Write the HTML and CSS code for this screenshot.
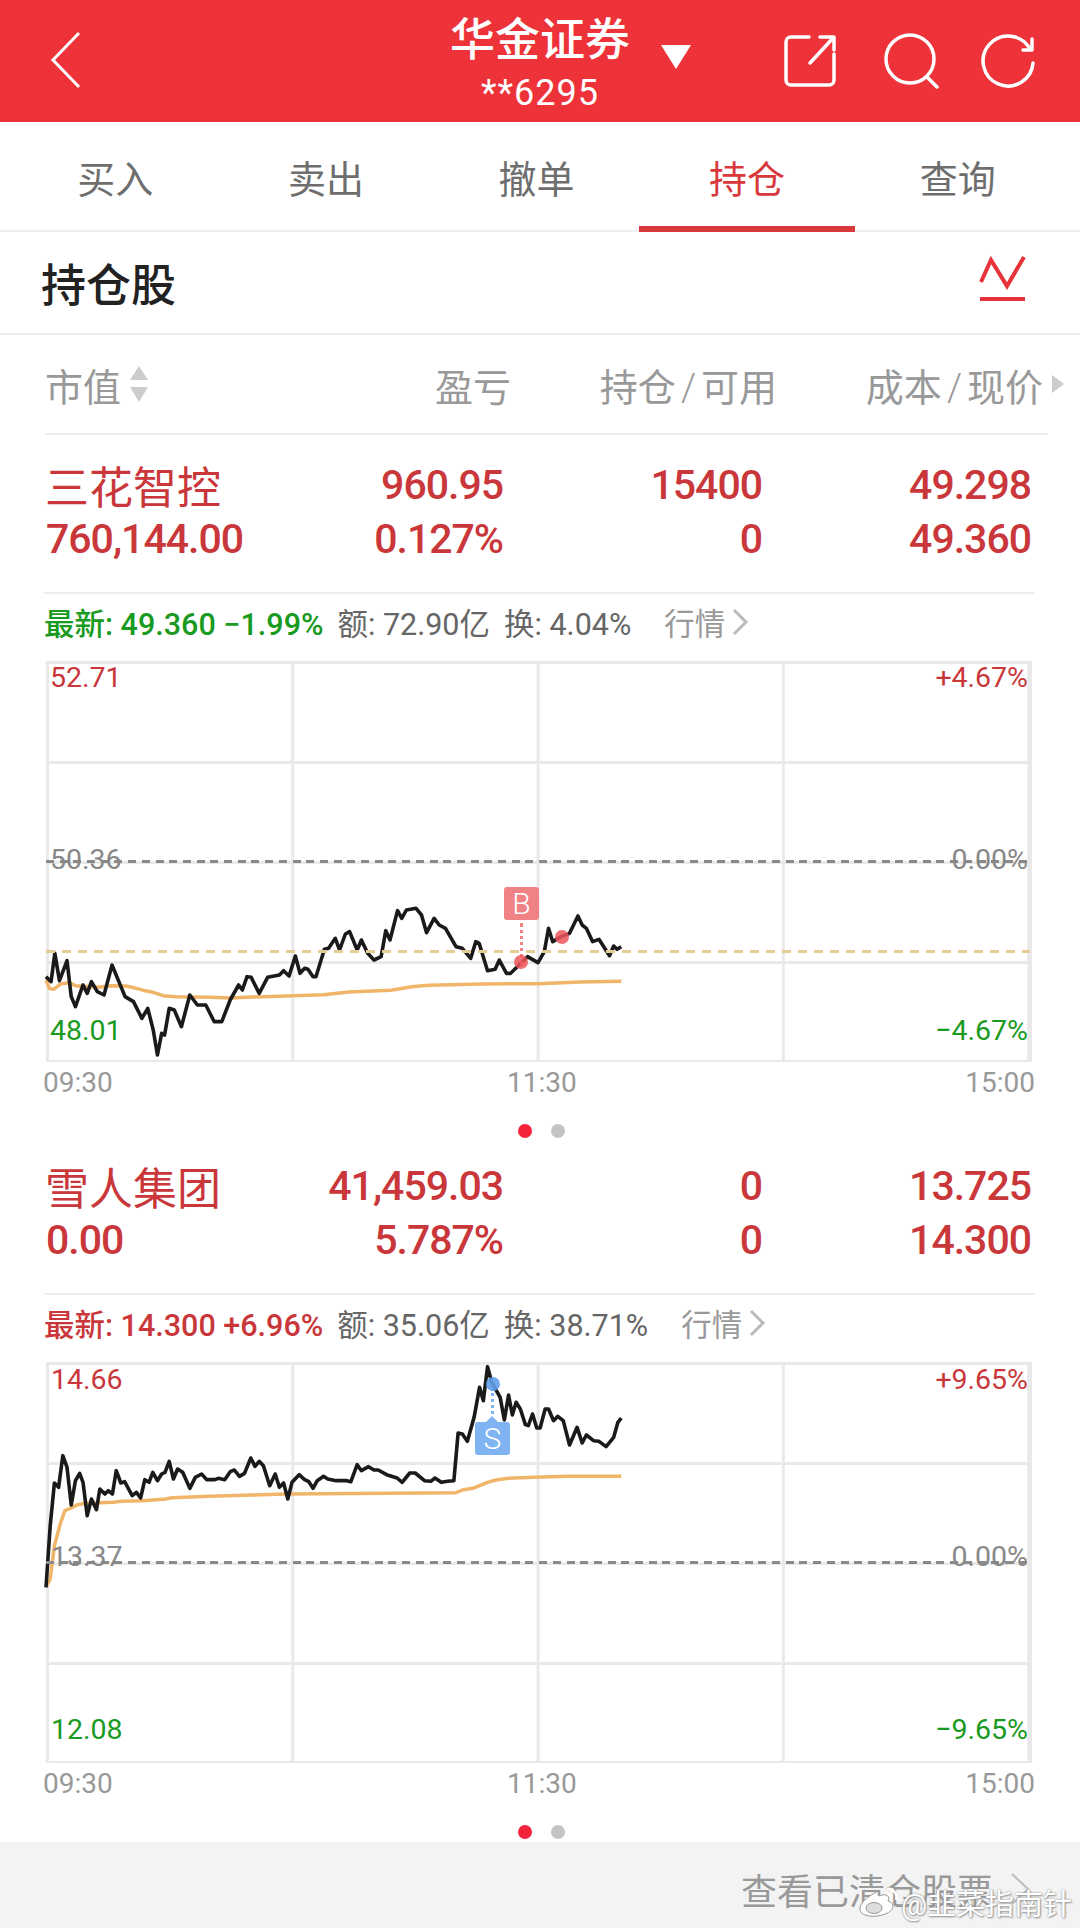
FILE: index.html
```html
<!DOCTYPE html>
<html lang="zh-CN">
<head>
  <meta charset="UTF-8" />
  <meta name="viewport" content="width=device-width, initial-scale=1.0"/>
  <title>持仓</title>
  <link rel="stylesheet" href="styles.css">
</head>
<body>

<div class="page">
  <header class="topbar">
    <svg class="back" viewBox="0 0 40 60" width="40" height="60"><path d="M32 3 L6 30 L32 57" /></svg>
    <div class="broker">
      <div class="broker-name">华金证券<svg class="caret" viewBox="0 0 34 28" width="34" height="28"><path d="M2 2 H32 L17 26 Z" /></svg></div>
      <div class="broker-acct">**6295</div>
    </div>
    <div class="top-icons">
      <svg viewBox="0 0 60 60" width="60" height="60"><path d="M29 7 H11 a5 5 0 0 0 -5 5 V50 a5 5 0 0 0 5 5 H49 a5 5 0 0 0 5 -5 V24 M30 33 L54 7 M40 7 H54 V20" /></svg>
      <svg viewBox="0 0 60 60" width="60" height="60"><circle cx="31" cy="29" r="24" /><path d="M48 47 L58 57" /></svg>
      <svg viewBox="0 0 60 60" width="60" height="60"><path d="M52 19 A25 25 0 1 0 55 33 M54 9 V20 H45" /></svg>
    </div>
  </header>

  <nav class="tabs">
    <a class="tab">买入</a>
    <a class="tab">卖出</a>
    <a class="tab">撤单</a>
    <a class="tab active">持仓</a>
    <a class="tab">查询</a>
  </nav>

  <div class="section-title">
    <h2>持仓股</h2>
    <svg viewBox="0 0 47 48" width="47" height="48"><path d="M2 27 L12 5 L28 31 L45 2" /><path class="base" d="M1 44 H46" /></svg>
  </div>

  <div class="table-head">
    <div class="sort-col">市值<svg viewBox="0 0 18 36" width="18" height="36"><path d="M9 0 L18 14 H0 Z M0 21 H18 L9 36 Z" /></svg></div>
    <div>盈亏</div>
    <div>持仓<i>/</i>可用</div>
    <div class="last-col">成本<i>/</i>现价<svg viewBox="0 0 12 18" width="12" height="18"><path d="M0 0 L12 9 L0 18 Z" /></svg></div>
  </div>

  <section class="holding first">
    <div class="stock-row">
      <div class="stock-name">三花智控</div><div>960.95</div><div>15400</div><div>49.298</div>
      <div>760,144.00</div><div>0.127%</div><div>0</div><div>49.360</div>
    </div>
    <div class="info">
      <span class="green">最新: 49.360 −1.99%</span>
      <span>额: 72.90亿</span>
      <span>换: 4.04%</span>
      <a class="quote">行情<svg viewBox="0 0 18 30" width="18" height="30"><path d="M3 3 L15 15 L3 27" /></svg></a>
    </div>
    <div class="chart">
      <svg class="plot" viewBox="110 -537 2340 1197" preserveAspectRatio="none">
        <polyline class="avg" points="110,420 118,445 128,448 145,432 165,428 180,437 215,440 240,441 265,437 300,438 325,445 345,452 365,457 388,467 420,470 500,472 550,474 600,471 700,467 770,464 830,456 930,451 980,440 1020,436 1150,432 1280,431 1380,426 1478,424" />
        <polyline class="price" points="110,410 122,425 131,340 142,422 160,362 170,470 180,500 198,435 208,460 218,425 232,455 248,465 267,375 285,430 298,470 318,485 338,535 352,505 365,570 375,645 385,580 392,585 403,505 415,510 432,560 452,465 470,495 490,495 510,545 528,545 548,480 568,435 577,450 588,410 598,412 617,460 637,412 665,405 675,392 688,408 703,348 714,400 725,385 733,388 745,410 752,410 772,328 782,325 798,295 808,330 822,282 832,275 850,330 860,300 875,340 890,360 907,350 918,272 928,300 946,212 956,235 967,210 990,205 1003,225 1015,278 1033,235 1045,255 1060,265 1085,320 1100,325 1120,355 1132,305 1140,310 1160,392 1178,388 1188,360 1205,400 1215,400 1235,375 1255,350 1280,368 1295,335 1305,265 1315,305 1335,290 1355,280 1375,228 1385,255 1395,265 1410,305 1425,298 1450,347 1460,318 1468,328 1478,320" />
      </svg>
      <div class="dash gray-dash"></div>
      <div class="dash gold-dash"></div>
      <span class="lbl l-top red">52.71</span>
      <span class="lbl l-mid gray">50.36</span>
      <span class="lbl l-bot green">48.01</span>
      <span class="lbl r-top red">+4.67%</span>
      <span class="lbl r-mid gray">0.00%</span>
      <span class="lbl r-bot green">−4.67%</span>
      <div class="mark buy">
        <span class="badge">B</span>
        <span class="stem"></span>
      </div>
      <span class="pt pt-buy"></span>
      <span class="pt pt-buy2"></span>
    </div>
    <div class="times"><span>09:30</span><span class="t-mid">11:30</span><span>15:00</span></div>
    <div class="pager"><span class="on"></span><span></span></div>
  </section>

  <section class="holding">
    <div class="stock-row">
      <div class="stock-name">雪人集团</div><div>41,459.03</div><div>0</div><div>13.725</div>
      <div>0.00</div><div>5.787%</div><div>0</div><div>14.300</div>
    </div>
    <div class="info">
      <span class="red">最新: 14.300 +6.96%</span>
      <span>额: 35.06亿</span>
      <span>换: 38.71%</span>
      <a class="quote">行情<svg viewBox="0 0 18 30" width="18" height="30"><path d="M3 3 L15 15 L3 27" /></svg></a>
    </div>
    <div class="chart chart-second">
      <svg class="plot" viewBox="110 69 2340 1197" preserveAspectRatio="none">
        <polyline class="avg" points="110,745 120,720 130,620 145,550 155,515 170,507 185,497 205,493 270,490 290,487 340,485 395,480 410,476 500,472 600,468 680,465 1085,461 1100,453 1125,448 1160,430 1180,423 1210,418 1270,415 1350,412 1478,412" />
        <polyline class="price" points="110,745 120,560 130,432 140,445 150,350 160,385 170,498 180,425 190,403 198,430 208,530 218,480 230,512 238,450 250,465 258,455 268,465 277,395 288,432 297,428 315,470 325,460 335,477 345,422 355,430 364,400 375,425 385,405 393,400 403,367 413,420 423,390 435,400 452,448 465,415 480,405 492,422 512,422 520,418 535,422 548,398 558,393 570,412 582,403 597,357 607,382 617,367 627,380 642,440 655,405 665,445 675,432 685,480 695,430 712,407 725,422 735,428 745,448 755,425 770,412 780,420 800,425 825,425 835,428 850,377 860,395 877,383 890,393 900,393 920,407 945,417 957,430 975,402 988,402 1010,425 1025,427 1035,417 1050,430 1065,427 1080,425 1090,282 1100,285 1112,307 1128,235 1141,145 1150,185 1160,83 1170,130 1190,175 1200,243 1210,168 1219,228 1228,190 1238,210 1250,257 1257,260 1267,225 1277,267 1285,267 1297,210 1305,210 1317,245 1327,232 1340,245 1355,318 1373,265 1385,312 1395,288 1412,305 1425,307 1442,323 1460,295 1470,250 1478,237" />
      </svg>
      <div class="dash gray-dash"></div>
      <span class="lbl l-top red">14.66</span>
      <span class="lbl l-mid gray">13.37</span>
      <span class="lbl l-bot green">12.08</span>
      <span class="lbl r-top red">+9.65%</span>
      <span class="lbl r-mid gray">0.00%</span>
      <span class="lbl r-bot green">−9.65%</span>
      <div class="mark sell">
        <span class="stem"></span>
        <span class="badge">S</span>
      </div>
      <span class="pt pt-sell"></span>
    </div>
    <div class="times"><span>09:30</span><span class="t-mid">11:30</span><span>15:00</span></div>
    <div class="pager"><span class="on"></span><span></span></div>
  </section>

  <footer class="closed">
    <span>查看已清仓股票</span>
    <svg viewBox="0 0 20 34" width="20" height="34"><path d="M2 2 L18 17 L2 32" /></svg>
    <div class="watermark">
      <svg viewBox="0 0 44 32" width="44" height="32"><path d="M18 7 C8 12 2 19 3 24 C4 29 12 31 20 30 C29 29 36 25 36 20 C36 17 33 16 31 15 C33 11 31 8 25 9 C22 10 21 10 21 9 C22 5 21 5 18 7 Z" /><ellipse class="eye" cx="17" cy="22" rx="8" ry="5.5" /><path class="arc" d="M30 3 C36 2 41 8 39 14 M30 8 C33 8 35 10 34 13" /></svg>
      <span>@韭菜指南针</span>
    </div>
  </footer>
</div>

</body>
</html>
```

FILE: styles.css
```css
* {
  box-sizing: border-box;
}
body {
  margin: 0;
  background: #fff;
  font-family: Roboto, "Noto Sans CJK SC", sans-serif;
}
.page {
  width: 1080px;
  height: 1928px;
  overflow: hidden;
  display: flex;
  flex-direction: column;
}

/* barra roja */
.topbar {
  height: 122px;
  flex: none;
  background: #ee3239;
  color: #fff;
  display: grid;
  grid-template-columns: 1fr auto 1fr;
  position: relative;
}
.back {
  margin: 30px 0 0 47px;
  fill: none;
  stroke: #fff;
  stroke-width: 3;
}
.broker {
  padding-top: 13px;
  text-align: center;
}
.broker-name {
  font-size: 45px;
  line-height: 56px;
  font-weight: 500;
  position: relative;
}
.caret {
  position: absolute;
  left: 100%;
  top: 30px;
  margin-left: 29px;
  fill: #fff;
}
.broker-acct {
  font-size: 36px;
  line-height: 40px;
  margin-top: 4px;
  letter-spacing: 1px;
}
.top-icons {
  display: flex;
  justify-content: flex-end;
  gap: 39px;
  padding: 30px 42px 0 0;
}
.top-icons svg {
  fill: none;
  stroke: #fff;
  stroke-width: 3.5;
  stroke-linecap: round;
  stroke-linejoin: round;
}

/* pestañas */
.tabs {
  height: 110px;
  flex: none;
  display: grid;
  grid-template-columns: repeat(5, 210.6px);
  padding-left: 10px;
  border-bottom: 2px solid #eee;
}
.tab {
  font-size: 38px;
  color: #6e6e6e;
  display: flex;
  align-items: center;
  justify-content: center;
  position: relative;
}
.tab.active {
  color: #d9383c;
}
.tab.active::after {
  content: "";
  position: absolute;
  left: -3px;
  right: -3px;
  bottom: -2px;
  height: 6px;
  background: #d9383c;
}

.section-title {
  height: 103px;
  flex: none;
  display: flex;
  align-items: center;
  justify-content: space-between;
  padding: 0 54px 0 41px;
  border-bottom: 2px solid #eee;
}
.section-title h2 {
  margin: 0;
  font-size: 45px;
  font-weight: 500;
  color: #222;
}
.section-title svg {
  margin-top: -8px;
  fill: none;
  stroke: #e8323a;
  stroke-width: 4;
}

/* tabla */
.table-head {
  height: 100px;
  flex: none;
  margin: 0 32px 0 45px;
  display: grid;
  grid-template-columns: 300px 166px 266px 266px;
  align-items: center;
  text-align: right;
  font-size: 38px;
  color: #999;
  border-bottom: 2px solid #eee;
}
.table-head i {
  font-style: normal;
  font-weight: 300;
  margin: 0 5px;
}
.sort-col {
  display: flex;
  align-items: center;
  gap: 9px;
}
.sort-col svg {
  fill: #ccc;
}
.last-col {
  position: relative;
}
.last-col svg {
  position: absolute;
  left: 100%;
  top: 18px;
  margin-left: 9px;
  fill: #ccc;
}

.holding.first {
  margin-top: 23px;
}
.holding + .holding {
  margin-top: 18px;
}
.stock-row {
  margin-left: 46px;
  display: grid;
  grid-template-columns: 277px 180px 259px 269px;
  grid-auto-rows: 54px;
  align-items: center;
  text-align: right;
  font-size: 41px;
  letter-spacing: -1px;
  font-weight: 500;
  color: #c9373b;
  padding-bottom: 26px;
}
.stock-row > div:nth-child(4n+1) {
  text-align: left;
}
.stock-name {
  margin-left: -1px;
  font-size: 44px;
  font-weight: 400;
  letter-spacing: 0;
}

.info {
  height: 60px;
  margin: 0 45px 9px 44px;
  padding-bottom: 3px;
  display: flex;
  align-items: center;
  gap: 14px;
  font-size: 30.5px;
  color: #666;
  border-top: 2px solid #eee;
}
.info .green, .info .red {
  font-weight: 500;
}
.quote {
  display: flex;
  align-items: center;
  gap: 6px;
  margin-left: 19px;
  color: #999;
}
.quote svg {
  fill: none;
  stroke: #bbb;
  stroke-width: 3;
}
.green {
  color: #199a21;
}
.red {
  color: #c9373b;
}
.gray {
  color: #888;
}

/* gráfico */
.chart {
  width: 986px;
  height: 401px;
  margin-left: 46px;
  position: relative;
  border-right: 2px solid #e9e9e9;
  border-bottom: 2px solid #e9e9e9;
  background-image:
    linear-gradient(#e9e9e9 3px, transparent 3px),
    linear-gradient(90deg, #e9e9e9 3px, transparent 3px);
  background-size: 245.3px 100px;
}
.plot {
  position: absolute;
  left: 0;
  top: 0;
  width: 100%;
  height: 100%;
  overflow: visible;
  fill: none;
}
.plot polyline {
  vector-effect: non-scaling-stroke;
  stroke-linejoin: round;
}
.price {
  stroke: #1a1a1a;
  stroke-width: 3.6;
}
.avg {
  stroke: #f0b569;
  stroke-width: 3.5;
}
.dash {
  position: absolute;
  left: 0;
  right: 0;
  height: 3px;
}
.gray-dash {
  top: 199px;
  background: repeating-linear-gradient(90deg, #8a8a8a 0 8px, transparent 8px 13.7px);
}
.gold-dash {
  top: 289px;
  background: repeating-linear-gradient(90deg, #e8cb94 0 9px, transparent 9px 16px);
}
.lbl {
  position: absolute;
  font-size: 28.5px;
  line-height: 32px;
}
.l-top, .l-mid, .l-bot {
  left: 4px;
}
.r-top, .r-mid, .r-bot {
  right: 2px;
}
.l-top, .r-top {
  top: 1px;
}
.l-mid, .r-mid {
  top: 183px;
}
.l-bot, .r-bot {
  top: 354px;
}
.chart-second .l-top, .chart-second .r-top {
  top: 2px;
}
.chart-second .l-mid, .chart-second .r-mid {
  top: 179px;
}
.chart-second .l-bot, .chart-second .r-bot {
  top: 352px;
}
.chart-second .l-top, .chart-second .l-mid, .chart-second .l-bot {
  left: 5px;
}

/* marcas de compra y venta */
.mark {
  position: absolute;
  width: 35px;
  display: flex;
  flex-direction: column;
  align-items: center;
}
.buy {
  left: 458px;
  top: 226px;
}
.sell {
  left: 429px;
  top: 26px;
}
.badge {
  width: 35px;
  height: 33px;
  flex: none;
  border-radius: 3px;
  color: #fff;
  font-size: 30px;
  font-weight: 300;
  line-height: 33px;
  text-align: center;
  position: relative;
}
.buy .badge {
  background: #f08286;
}
.sell .badge {
  background: #7fb3f1;
}
.sell .badge::before {
  content: "";
  position: absolute;
  left: 11px;
  top: -6px;
  border-left: 6px solid transparent;
  border-right: 6px solid transparent;
  border-bottom: 6px solid #7fb3f1;
}
.stem {
  width: 0;
  flex: none;
  border-left: 3px dotted;
}
.buy .stem {
  height: 42px;
  margin-top: 3px;
  border-color: #f08286;
}
.sell .stem {
  height: 26px;
  margin-bottom: 8px;
  border-color: #7fb3f1;
}
.pt {
  position: absolute;
  width: 14px;
  height: 14px;
  border-radius: 50%;
}
.pt-buy {
  left: 468px;
  top: 294px;
  background: rgba(236, 86, 90, 0.85);
}
.pt-buy2 {
  left: 509px;
  top: 269px;
  background: rgba(236, 86, 90, 0.85);
}
.pt-sell {
  left: 440px;
  top: 15px;
  background: rgba(99, 160, 235, 0.9);
}

.times {
  height: 40px;
  margin: 0 45px 0 43px;
  display: flex;
  justify-content: space-between;
  align-items: center;
  font-size: 28px;
  color: #999;
  position: relative;
}
.t-mid {
  position: absolute;
  left: 464px;
}
.pager {
  height: 39px;
  padding: 22px 0 0 518px;
  display: flex;
  gap: 19px;
}
.pager span {
  width: 14px;
  height: 14px;
  border-radius: 50%;
  background: #c4c4c4;
}
.pager .on {
  background: #f5243a;
}

/* pie */
.closed {
  flex: 1;
  background: #f3f3f3;
  display: flex;
  align-items: center;
  justify-content: flex-end;
  gap: 17px;
  padding: 8px 50px 0 0;
  font-size: 36px;
  color: #999;
  position: relative;
}
.closed > svg {
  fill: none;
  stroke: #bbb;
  stroke-width: 2;
}
.watermark {
  position: absolute;
  left: 857px;
  top: 39px;
  display: flex;
  align-items: center;
  font-size: 29px;
  color: #fff;
  text-shadow: 0 0 2px #8a8a8a, 1px 1px 2px #999;
}
.watermark svg {
  flex: none;
  fill: #fff;
  stroke: #999;
  stroke-width: 1;
}
.watermark .eye {
  fill: #ddd;
}
.watermark .arc {
  fill: none;
  stroke: #fff;
  stroke-width: 2.5;
}
```
